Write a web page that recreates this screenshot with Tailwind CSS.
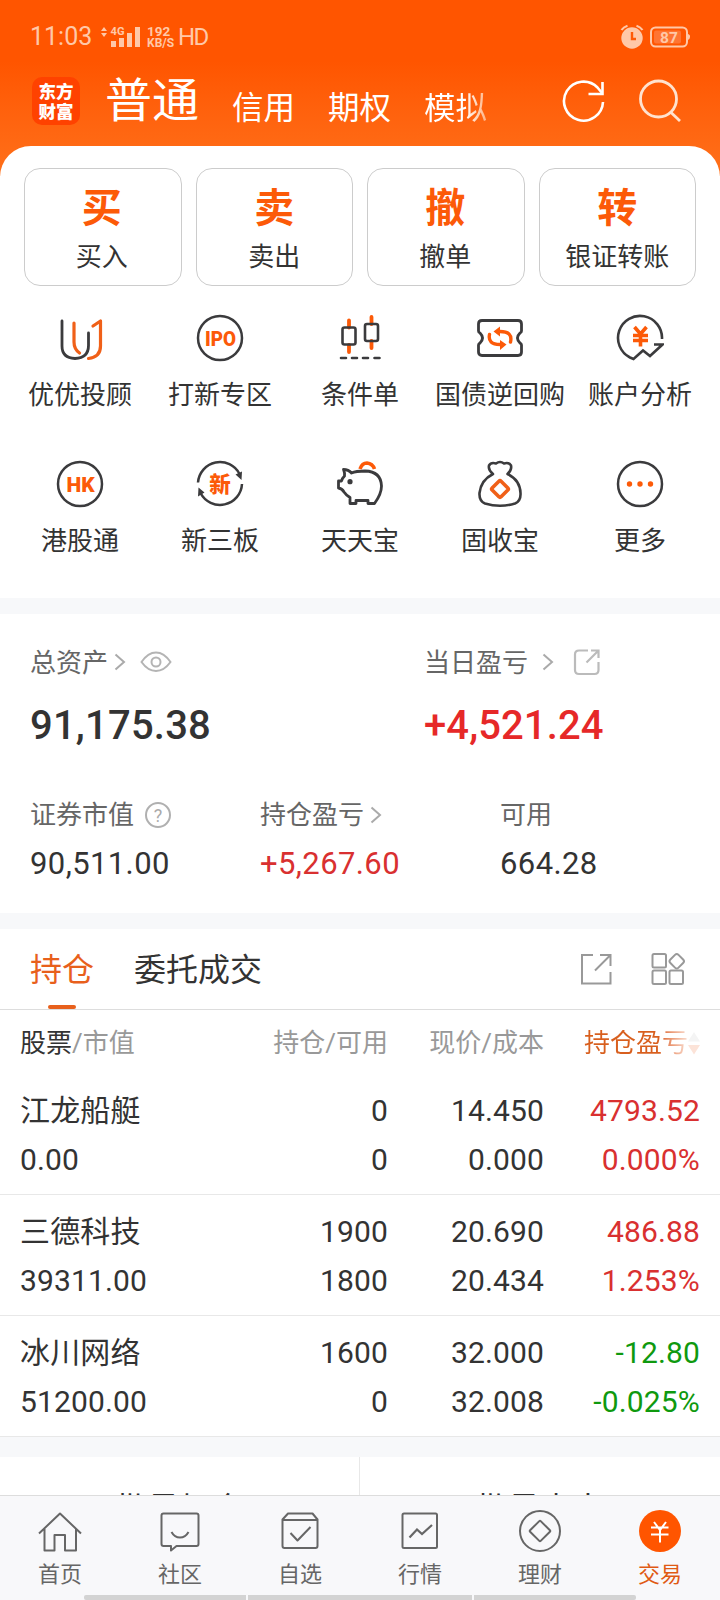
<!DOCTYPE html>
<html lang="zh-CN">
  <head>
    <meta charset="UTF-8" />
    <meta name="viewport" content="width=device-width, initial-scale=1.0" />
    <title>交易 - 东方财富</title>
    <script src="https://cdn.jsdelivr.net/npm/@tailwindcss/browser@4"></script>
  </head>
  <body
    class="w-[720px] h-[1600px] overflow-hidden flex flex-col bg-white text-[#333] font-['Roboto','Noto_Sans_CJK_SC',sans-serif] leading-none whitespace-nowrap"
  >
    <header class="h-[176px] shrink-0 bg-linear-to-b from-[#ff5500] from-35% to-[#ff7019] text-white">
      <!-- Barra de estado -->
      <div class="h-[72px] flex items-center justify-between pl-[30px] pr-[30px] pt-px text-[#ffc8a8]">
        <div class="flex items-center">
          <span class="w-[70px] text-[25px]">11:03</span>
          <svg class="w-[42px] h-[26px]" viewBox="0 0 42 26" fill="currentColor">
            <path d="M1 7l3-4 3 4zM1 9h6l-3 4z" />
            <text x="10.500" y="10.500" font-size="11.500" font-weight="700" textLength="14" lengthAdjust="spacingAndGlyphs">4G</text>
            <path d="M11 17h5v6h-5zM19 14h5v9h-5zM27 9h5v14h-5zM35 3h5v20h-5z" />
          </svg>
          <div class="w-[32px] ml-[5px] flex flex-col text-[12px] font-bold">
            <span class="text-[13.5px] leading-[12px]">192</span>
            <span class="leading-[12px]">KB/S</span>
          </div>
          <span class="-ml-px text-[24px] tracking-[-1.5px]">HD</span>
        </div>
        <div class="flex items-center gap-[6px]">
          <svg class="w-[24px] h-[25px]" viewBox="0 0 24 25">
            <circle cx="12" cy="14" r="10.7" fill="currentColor" />
            <path d="M1.500 6Q3.500 3 7.500 1.700M22.500 6Q20.500 3 16.500 1.700" fill="none" stroke="currentColor" stroke-width="2.200" />
            <path d="M12 8v7h4" fill="none" stroke="#ff5a08" stroke-width="2.400" />
          </svg>
          <svg class="w-[40px] h-[22px]" viewBox="0 0 40 22">
            <rect x="1" y="1.500" width="36" height="19" rx="4.500" fill="none" stroke="currentColor" stroke-width="2" />
            <rect x="4" y="4.500" width="27" height="13" rx="2" fill="#ff7433" />
            <path d="M38 8q2.500 1 2 3q0 2-2 3z" fill="currentColor" />
            <text x="19" y="16.500" text-anchor="middle" font-size="15.500" font-weight="700" fill="currentColor">87</text>
          </svg>
        </div>
      </div>

      <div class="h-[74px] flex items-start pl-[32px]">
        <div
          class="mt-[5px] w-[48px] h-[48px] rounded-[10px] bg-[#ff4200] flex flex-col items-center pt-[4px] text-[17.5px] leading-[20px] font-black font-['Noto_Sans_CJK_SC',sans-serif]"
        >
          <span>东方</span>
          <span>财富</span>
        </div>
        <span class="ml-[25px] mt-[5px] text-[47px]">普通</span>
        <span class="ml-[33px] mt-[21px] text-[31.5px]">信用</span>
        <span class="ml-[33px] mt-[21px] text-[31.5px]">期权</span>
        <span
          class="ml-[33px] mt-[21px] text-[31.5px] bg-linear-to-r from-white from-65% to-[#ffb080] bg-clip-text text-transparent"
          >模拟</span
        >
        <svg class="ml-[75px] mt-[7px] w-[44px] h-[44px]" viewBox="0 0 44 44" fill="none" stroke="#fff" stroke-width="2.600">
          <path d="M41 23A19.500 19.500 0 1 1 35.500 8.500L40 14" />
          <path d="M40.500 3v12h-14" />
        </svg>
        <svg class="ml-[32px] mt-[6px] w-[44px] h-[44px]" viewBox="0 0 44 44" fill="none" stroke="#ffe2cf" stroke-width="2.800">
          <circle cx="20.500" cy="21" r="18" />
          <path d="M32.500 34l9.500 9" />
        </svg>
      </div>
    </header>

    <main class="relative -mt-[30px] flex-1 min-h-0 overflow-hidden bg-white rounded-t-[31px]">
      <div class="px-[24px] pt-[22px] grid grid-cols-4 gap-[14px]">
        <div class="h-[118px] pr-[2px] border border-[#ccc] rounded-[16px] flex flex-col items-center">
          <b class="mt-[20px] text-[40px] text-[#fc5a08]">买</b>
          <span class="mt-[15px] text-[26px]">买入</span>
        </div>
        <div class="h-[118px] border border-[#ccc] rounded-[16px] flex flex-col items-center">
          <b class="mt-[20px] text-[40px] text-[#fc5a08]">卖</b>
          <span class="mt-[15px] text-[26px]">卖出</span>
        </div>
        <div class="h-[118px] pr-[1px] border border-[#ccc] rounded-[16px] flex flex-col items-center">
          <b class="mt-[20px] text-[40px] text-[#fc5a08]">撤</b>
          <span class="mt-[15px] text-[26px]">撤单</span>
        </div>
        <div class="h-[118px] border border-[#ccc] rounded-[16px] flex flex-col items-center">
          <b class="mt-[20px] text-[40px] text-[#fc5a08]">转</b>
          <span class="mt-[15px] text-[26px]">银证转账</span>
        </div>
      </div>

      <!-- Accesos -->
      <div class="h-[312px] px-[10px] pt-[28px] grid grid-cols-5 auto-rows-[146px] text-[26px]">
        <div class="flex flex-col items-center gap-[20px]">
          <svg class="w-[48px] h-[48px]" viewBox="0 0 48 48" fill="none" stroke="#3b3b3d" stroke-width="2.800" stroke-linecap="round" stroke-linejoin="round">
            <path d="M6 7v25q0 12 13 12.500q13.500-.5 13.500-13V19" />
            <path d="M18 9v19q0 7 5.500 11M37 12l7.500-5v25q0 11-12 12.500" stroke="#f06018" stroke-width="3.200" />
          </svg>
          <span>优优投顾</span>
        </div>
        <div class="flex flex-col items-center gap-[20px]">
          <svg class="w-[48px] h-[48px]" viewBox="0 0 48 48">
            <circle cx="24" cy="24" r="22" fill="none" stroke="#3b3b3d" stroke-width="2.500" />
            <text x="24.500" y="31.500" text-anchor="middle" font-size="21" font-weight="900" fill="#fc5a08" textLength="31" lengthAdjust="spacingAndGlyphs">IPO</text>
          </svg>
          <span>打新专区</span>
        </div>
        <div class="flex flex-col items-center gap-[20px]">
          <svg class="w-[48px] h-[48px]" viewBox="0 0 48 48" fill="none" stroke="#3b3b3d" stroke-width="2.600" stroke-linecap="round">
            <path d="M13 6.500v7M13 31v7M35.500 3v7M35.500 27v7" stroke="#fc5a08" stroke-width="3.800" />
            <rect x="6.500" y="13.500" width="13" height="17" rx="2" />
            <rect x="29" y="10" width="13" height="17" rx="2" />
            <path d="M5 44h5M16 44h5M27 44h5M38.500 44h5" />
          </svg>
          <span>条件单</span>
        </div>
        <div class="flex flex-col items-center gap-[20px]">
          <svg class="w-[48px] h-[48px]" viewBox="0 0 48 48" fill="none" stroke="#3b3b3d" stroke-width="2.800">
            <path d="M6 6.500h36q3.500 0 3.500 3.500v7q0 1.500-1.500 2q-5 5 0 10q1.500 1 1.500 2v7q0 3.500-3.500 3.500H6q-3.500 0-3.500-3.500v-7q0-1 1.500-2q5-5 0-10q-1.500-.5-1.500-2V10q0-3.500 3.500-3.500z" />
            <g stroke="#fc5a08" stroke-width="3.400" stroke-linecap="round">
              <path d="M13.500 20.500Q11.500 30.500 24 30.500M34.500 28Q37 17.500 24 17.500" />
              <path d="M17.500 17.500l6.500-5v10zM30.500 30.500l-6.500-4.500v10z" fill="#fc5a08" stroke="none" />
            </g>
          </svg>
          <span>国债逆回购</span>
        </div>
        <div class="flex flex-col items-center gap-[20px]">
          <svg class="w-[48px] h-[48px]" viewBox="0 0 48 48" fill="none" stroke="#3b3b3d" stroke-width="2.600">
            <path d="M46 25A22 22 0 1 0 14 43.500L17.500 45L27 36.500L34 42L46.500 30.500H38" />
            <path d="M18.500 13l6 7l6-7M24.500 20v12.500M17 21.500h15M17 26.500h15" stroke="#fc5a08" stroke-width="3.600" />
          </svg>
          <span>账户分析</span>
        </div>
        <div class="flex flex-col items-center gap-[20px]">
          <svg class="w-[48px] h-[48px]" viewBox="0 0 48 48">
            <circle cx="24" cy="24" r="22" fill="none" stroke="#3b3b3d" stroke-width="2.500" />
            <text x="24.500" y="31.500" text-anchor="middle" font-size="21" font-weight="900" fill="#fc5a08">HK</text>
          </svg>
          <span>港股通</span>
        </div>
        <div class="flex flex-col items-center gap-[20px]">
          <svg class="w-[48px] h-[48px]" viewBox="0 0 48 48" fill="none" stroke="#3b3b3d" stroke-width="2.500">
            <path d="M2 22.500A22 22 0 0 1 43.500 14M46 24A22 22 0 0 1 4.500 33" />
            <path d="M39.500 14.500l6.500-3l-.5 8.500zM8.500 32.500l-6.500 4l.5-9z" fill="#3b3b3d" stroke="none" />
            <text x="24" y="32" text-anchor="middle" font-size="21.500" font-weight="900" fill="#fc5a08" stroke="none">新</text>
          </svg>
          <span>新三板</span>
        </div>
        <div class="flex flex-col items-center gap-[20px]">
          <svg class="w-[48px] h-[48px]" viewBox="0 0 48 48" fill="none" stroke="#3b3b3d" stroke-width="2.800" stroke-linejoin="round">
            <path d="M15.500 13Q12.500 9.500 7.500 9.500Q9 13 8.500 16Q6 18.500 5.500 21H2.500v7q3.500.5 5.500 4q2 3 6 5.500v6h6v-3h12v3h6.500Q45.500 34 45.500 26Q45 11.500 29 11Q20 11 15.500 13z" />
            <circle cx="14" cy="21.700" r="2.600" fill="#3b3b3d" stroke="none" />
            <path d="M24 9Q26 3 31 3Q36.500 3.500 38.500 9" stroke="#fc5a08" stroke-width="3.600" />
          </svg>
          <span>天天宝</span>
        </div>
        <div class="flex flex-col items-center gap-[20px]">
          <svg class="w-[48px] h-[48px]" viewBox="0 0 48 48" fill="none" stroke="#3b3b3d" stroke-width="2.600" stroke-linejoin="round">
            <path d="M17 14Q12 10 13 5.500Q15 2 20 3.500Q24 .5 28 3.500Q33 2 35 5.500Q36 10 31.500 14Q44 20 44.500 33Q45 41 39 43.500Q24 48 9 43.500Q3 41 3.500 33Q5 20 17 14z" />
            <rect x="17.700" y="22.700" width="12.600" height="12.600" rx="1.500" transform="rotate(45 24 29)" stroke="#f06018" stroke-width="3.600" />
          </svg>
          <span>固收宝</span>
        </div>
        <div class="flex flex-col items-center gap-[20px]">
          <svg class="w-[48px] h-[48px]" viewBox="0 0 48 48">
            <circle cx="24" cy="24" r="22" fill="none" stroke="#3b3b3d" stroke-width="2.500" />
            <g fill="#fc5a08">
              <circle cx="13.500" cy="24" r="2.700" />
              <circle cx="24" cy="24" r="2.700" />
              <circle cx="34.500" cy="24" r="2.700" />
            </g>
          </svg>
          <span>更多</span>
        </div>
      </div>

      <div class="h-[16px] bg-[#f7f8fa]"></div>

      <!-- Activos -->
      <section class="h-[299px] px-[30px]">
        <div class="grid grid-cols-[394px_1fr] pt-[34px]">
          <div>
            <div class="h-[28px] flex items-center text-[26px] text-[#666]">
              <span class="pt-[2px]">总资产</span>
              <svg class="ml-[6px] w-[12px] h-[18px]" viewBox="0 0 12 18" fill="none" stroke="#aaa" stroke-width="2"><path d="M1.500 1.500L10 9l-8.500 7.500" /></svg>
              <svg class="ml-[14px] w-[32px] h-[22px]" viewBox="0 0 32 22" fill="none" stroke="#b4b4b4" stroke-width="2">
                <path d="M1.500 11Q8 1.500 16 1.500T30.500 11Q24 20 16 20T1.500 11z" />
                <circle cx="16" cy="11" r="4.500" />
              </svg>
            </div>
            <p class="mt-[30px] text-[40px] font-medium tracking-[0.2px]">91,175.38</p>
          </div>
          <div>
            <div class="h-[28px] flex items-center text-[26px] text-[#666]">
              <span class="pt-[2px]">当日盈亏</span>
              <svg class="ml-[14px] w-[12px] h-[18px]" viewBox="0 0 12 18" fill="none" stroke="#aaa" stroke-width="2"><path d="M1.500 1.500L10 9l-8.500 7.500" /></svg>
              <svg class="ml-[19px] w-[28px] h-[28px]" viewBox="0 0 28 28" fill="none" stroke="#bbb" stroke-width="2.200">
                <path d="M15 2.500H6Q2 2.500 2 6.500v15.500q0 4 4 4h15.500q4 0 4-4v-8" />
                <path d="M13.500 14.500L25 3M18 2.500h7.500V10" />
              </svg>
            </div>
            <p class="mt-[30px] text-[40px] font-medium tracking-[0.1px] text-[#e62828]">+4,521.24</p>
          </div>
        </div>
        <div class="mt-[55px] grid grid-cols-[230px_240px_1fr]">
          <div>
            <div class="h-[28px] flex items-center text-[26px] text-[#666]">
              <span>证券市值</span>
              <svg class="ml-[10px] w-[28px] h-[28px]" viewBox="0 0 28 28">
                <circle cx="14" cy="14" r="12" fill="none" stroke="#b0b0b0" stroke-width="2" />
                <text x="14" y="20.500" text-anchor="middle" font-size="18" fill="#aaa">?</text>
              </svg>
            </div>
            <p class="mt-[19px] text-[31px] tracking-[0.4px]">90,511.00</p>
          </div>
          <div>
            <div class="h-[28px] flex items-center text-[26px] text-[#666]">
              <span>持仓盈亏</span>
              <svg class="ml-[6px] w-[12px] h-[18px]" viewBox="0 0 12 18" fill="none" stroke="#aaa" stroke-width="2"><path d="M1.500 1.500L10 9l-8.500 7.500" /></svg>
            </div>
            <p class="mt-[19px] text-[31px] tracking-[0.4px] text-[#d93030]">+5,267.60</p>
          </div>
          <div>
            <div class="h-[28px] flex items-center text-[26px] text-[#666]">可用</div>
            <p class="mt-[19px] text-[31px] tracking-[0.4px]">664.28</p>
          </div>
        </div>
      </section>

      <div class="h-[16px] bg-[#f7f8fa]"></div>

      <div class="h-[81px] border-b border-[#ddd] pl-[30px] pr-[35px] flex items-center">
        <div class="h-full w-[64px] flex flex-col items-center justify-between pt-[25px]">
          <span class="text-[32px] text-[#e8601c]">持仓</span>
          <span class="w-[28px] h-[4px] rounded-[2px] bg-[#e8601c]"></span>
        </div>
        <span class="ml-[40px] pt-[2px] text-[32px]">委托成交</span>
        <svg class="ml-auto w-[32px] h-[32px]" viewBox="0 0 32 32" fill="none" stroke="#999" stroke-width="2">
          <path d="M13 2H2v28.500h28.500V19" />
          <path d="M15 17.500L30 2.500M20 2h10.500v11" />
        </svg>
        <svg class="ml-[39px] w-[34px] h-[34px]" viewBox="0 0 34 34" fill="none" stroke="#999" stroke-width="2">
          <rect x="1.500" y="2" width="13.500" height="13.500" rx="1.500" />
          <rect x="1.500" y="18.500" width="13.500" height="13.500" rx="1.500" />
          <rect x="18.500" y="18.500" width="13.500" height="13.500" rx="1.500" />
          <rect x="20" y="3.500" width="11.500" height="11.500" rx="2.500" transform="rotate(45 25.750 9.250)" />
        </svg>
      </div>

      <!-- Posiciones -->
      <div class="h-[64px] px-[20px] grid grid-cols-[200px_168px_156px_156px] items-center pt-[2px] text-[26px] text-[#999] text-right">
        <span class="text-left"><span class="text-[#333]">股票</span>/市值</span>
        <span>持仓/可用</span>
        <span>现价/成本</span>
        <span class="flex items-center justify-end">
          <span class="bg-linear-to-r from-[#d85f1e] from-72% to-[#f9dfd2] bg-clip-text text-transparent">持仓盈亏</span>
          <svg class="w-[12px] h-[24px]" viewBox="0 0 12 24"><path d="M0 10.500L6 1l6 9.500z" fill="#f4f4f4" /><path d="M0 14h12l-6 9.500z" fill="#fce3d8" /></svg>
        </span>
      </div>
      <div class="h-[121px] border-b border-[#e8e8e8] px-[20px] grid grid-cols-[200px_168px_156px_156px] grid-rows-[49px_49px] pt-[12px] items-center text-[30px] tracking-[0.15px] text-right">
        <span class="text-left">江龙船艇</span><span>0</span><span>14.450</span><span class="text-[#d93030]">4793.52</span>
        <span class="text-left">0.00</span><span>0</span><span>0.000</span><span class="text-[#d93030]">0.000%</span>
      </div>
      <div class="h-[121px] border-b border-[#e8e8e8] px-[20px] grid grid-cols-[200px_168px_156px_156px] grid-rows-[49px_49px] pt-[12px] items-center text-[30px] tracking-[0.15px] text-right">
        <span class="text-left">三德科技</span><span>1900</span><span>20.690</span><span class="text-[#d93030]">486.88</span>
        <span class="text-left">39311.00</span><span>1800</span><span>20.434</span><span class="text-[#d93030]">1.253%</span>
      </div>
      <div class="h-[121px] border-b border-[#e8e8e8] px-[20px] grid grid-cols-[200px_168px_156px_156px] grid-rows-[49px_49px] pt-[12px] items-center text-[30px] tracking-[0.15px] text-right">
        <span class="text-left">冰川网络</span><span>1600</span><span>32.000</span><span class="text-[#0f990f]">-12.80</span>
        <span class="text-left">51200.00</span><span>0</span><span>32.008</span><span class="text-[#0f990f]">-0.025%</span>
      </div>

      <div class="h-[20px] bg-[#f7f8fa]"></div>
      <div class="h-[100px] grid grid-cols-2 text-[32px] text-center">
        <div class="border-r border-[#e8e8e8] pt-[36px]">批量加仓</div>
        <div class="pt-[36px]">批量卖出</div>
      </div>
    </main>

    <nav class="h-[105px] shrink-0 bg-[#f8f8fa] border-t border-[#ddd] flex flex-col justify-between">
      <div class="grid grid-cols-6 pt-[13px] text-[22px] text-[#666] text-center">
        <div class="flex flex-col items-center gap-[11px]">
          <svg class="w-[44px] h-[44px]" viewBox="0 0 44 44" fill="none" stroke="#666" stroke-width="2" stroke-linejoin="round">
            <path d="M1 24.500L22 4.500l21 20M6.500 20v21.500h10V26h10.500v15.500h11V20" />
          </svg>
          <span>首页</span>
        </div>
        <div class="flex flex-col items-center gap-[11px]">
          <svg class="w-[44px] h-[44px]" viewBox="0 0 44 44" fill="none" stroke="#666" stroke-width="2" stroke-linejoin="round">
            <path d="M5.500 4.500h33q2 0 2 2v28.500q0 2-2 2H18.500L13 41.500V37H5.500q-2 0-2-2V6.500q0-2 2-2z" />
            <path d="M13.500 23q3 5.500 8.500 5.500t8.500-5.500" />
          </svg>
          <span>社区</span>
        </div>
        <div class="flex flex-col items-center gap-[11px]">
          <svg class="w-[44px] h-[44px]" viewBox="0 0 44 44" fill="none" stroke="#666" stroke-width="2" stroke-linejoin="round">
            <path d="M4.500 10.500L10 4.500h24.500l5 6v26.500q0 2-2 2h-31q-2 0-2-2zM4.500 11h35M12.500 24l7 7.500L32.500 18" />
          </svg>
          <span>自选</span>
        </div>
        <div class="flex flex-col items-center gap-[11px]">
          <svg class="w-[44px] h-[44px]" viewBox="0 0 44 44" fill="none" stroke="#666" stroke-width="2">
            <rect x="4.500" y="4.500" width="34.500" height="34.500" rx="1.500" />
            <path d="M11.500 28.500l7.500-8l5 4.500l10-9" stroke-width="2.200" />
          </svg>
          <span>行情</span>
        </div>
        <div class="flex flex-col items-center gap-[11px]">
          <svg class="w-[44px] h-[44px]" viewBox="0 0 44 44" fill="none" stroke="#666" stroke-width="2">
            <circle cx="22" cy="22" r="20" />
            <rect x="14.500" y="14.500" width="15" height="15" rx="1" transform="rotate(45 22 22)" />
          </svg>
          <span>理财</span>
        </div>
        <div class="flex flex-col items-center gap-[11px]">
          <svg class="w-[44px] h-[44px]" viewBox="0 0 44 44" fill="none" stroke="#fff" stroke-width="2">
            <circle cx="22" cy="22" r="21" fill="#ff5500" stroke="none" />
            <path d="M16 13l6 8l6-8M22 20v13.500M13 18.500h17.500M13 25.500h17.500" />
          </svg>
          <span class="text-[#e05a14]">交易</span>
        </div>
      </div>
      <div class="h-[5px] px-[84px] flex gap-[2px]">
        <span class="w-[162px] bg-[#d3d3d3] rounded-l-[2px]"></span>
        <span class="flex-1 bg-[#d3d3d3]"></span>
        <span class="w-[162px] bg-[#d3d3d3] rounded-r-[2px]"></span>
      </div>
    </nav>
  </body>
</html>
